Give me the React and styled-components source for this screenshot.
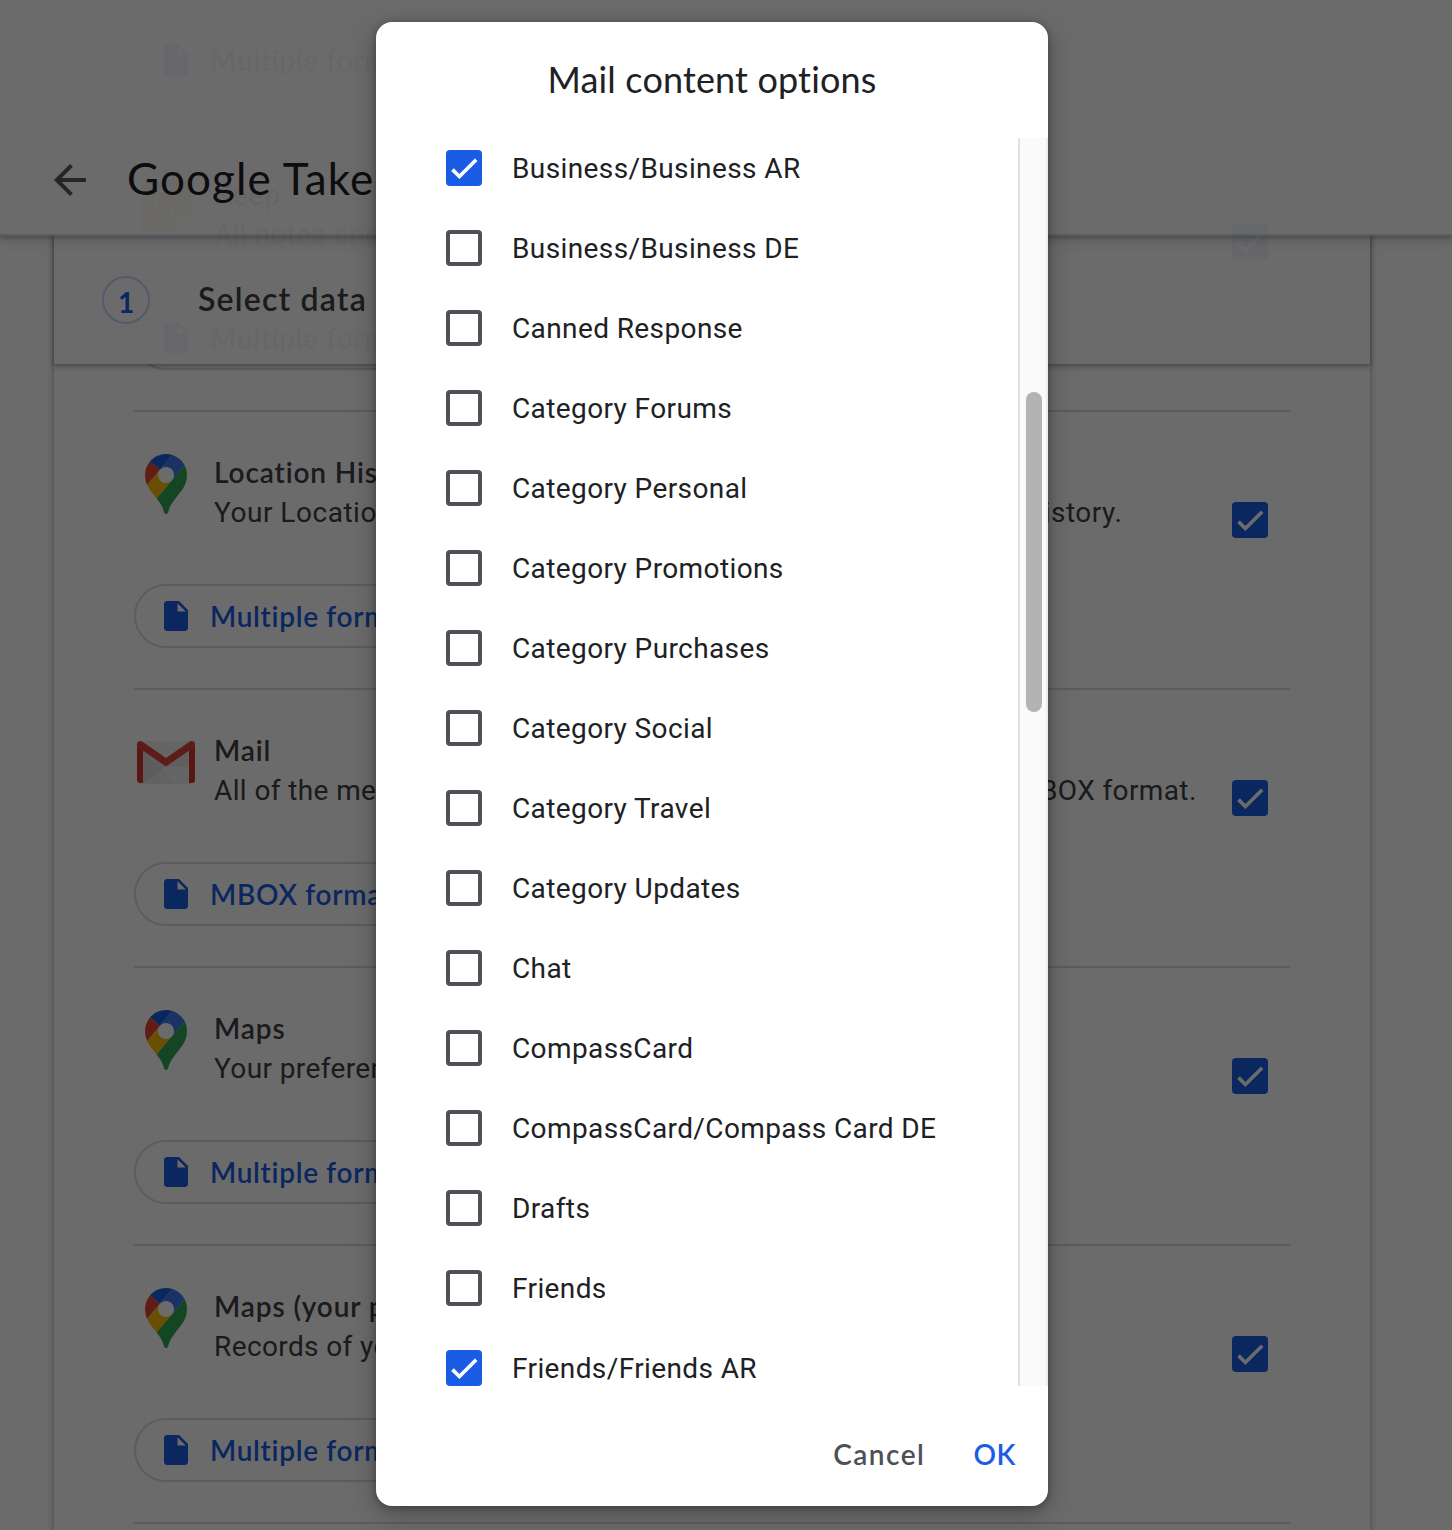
import React from "react";
import styled, { createGlobalStyle, css } from "styled-components";

const GlobalStyle = createGlobalStyle`
  *, *::before, *::after { box-sizing: border-box; }
  html, body { margin: 0; padding: 0; background: #fff; }
  body { overflow: hidden; }
`;

const body = css`font-family: Roboto, "Liberation Sans", sans-serif;`;
const display = css`font-family: Lato, "Open Sans", "Liberation Sans", sans-serif;`;

const BLUE = "#1a5de4";

const Page = styled.div`
  ${body}
  position: relative;
  width: 1452px;
  height: 1530px;
  overflow: hidden;
  background: #fff;
  color: #3c4043;
`;

const Card = styled.main`
  width: 1316px;
  height: 1930px;
  margin: -146px 0 0 54px;
  padding: 0 80px;
  box-shadow: 0 2px 4px rgba(60, 64, 67, 0.3), 0 2px 6px 2px rgba(60, 64, 67, 0.15);
`;

const Section = styled.section`
  display: flex;
  flex-direction: column;
  justify-content: space-between;
  align-items: flex-start;
  height: 278px;
  padding: 40px 0;
  border-top: 2px solid #dadce0;
`;

const Summary = styled.div`
  display: flex;
  align-items: flex-start;
  width: 100%;
  height: 86px;
  padding-right: 22px;
`;

const ProductIcon = styled.span`
  display: flex;
  justify-content: center;
  width: 64px;
  height: 60px;
  margin: 2px 16px 0 0;
  flex: none;
`;

const Copy = styled.div`
  flex: 1;
  white-space: nowrap;
`;

const ProductName = styled.h3`
  ${display}
  margin: 0;
  font-size: 28px;
  line-height: 40px;
  font-weight: 600;
  letter-spacing: 0.9px;
`;

const Description = styled.p`
  margin: 1px 0 0;
  font-size: 28px;
  line-height: 40px;
  letter-spacing: ${(p) => (p.$loose ? "0.52px" : "0.39px")};
`;

const CheckSlot = styled.span`
  display: flex;
  margin-top: 50px;
`;

const FormatButton = styled.button`
  ${display}
  display: inline-flex;
  align-items: center;
  gap: 16px;
  height: 64px;
  padding: 0 32px 0 22px;
  border: 2px solid #dadce0;
  border-radius: 32px;
  background: transparent;
  color: ${BLUE};
  font-size: 28px;
  font-weight: 600;
  letter-spacing: 0.7px;
  white-space: nowrap;
`;

const FormatLabel = styled.span`
  padding-bottom: 1px;
`;

const AppBar = styled.header`
  position: absolute;
  top: 0;
  left: 0;
  z-index: 2;
  display: flex;
  align-items: center;
  gap: 33px;
  width: 100%;
  height: 236px;
  padding: 126px 0 0 46px;
  border-bottom: 2px solid #dadce0;
  background: rgba(255, 255, 255, 0.94);
  box-shadow: 0 2px 4px rgba(60, 64, 67, 0.3), 0 4px 12px 2px rgba(60, 64, 67, 0.15);
`;

const AppTitle = styled.h1`
  ${display}
  margin: 0;
  padding-bottom: 4px;
  color: #202124;
  font-size: 44px;
  font-weight: 400;
  line-height: 56px;
  letter-spacing: 1.1px;
  white-space: nowrap;
`;

const StepBar = styled.div`
  position: absolute;
  top: 236px;
  left: 54px;
  z-index: 1;
  display: flex;
  align-items: center;
  gap: 48px;
  width: 1316px;
  height: 128px;
  padding-left: 48px;
  background: rgba(255, 255, 255, 0.94);
  box-shadow: 0 2px 4px rgba(60, 64, 67, 0.3), 0 2px 6px 2px rgba(60, 64, 67, 0.15);
`;

const StepNumber = styled.span`
  ${display}
  display: flex;
  align-items: center;
  justify-content: center;
  width: 48px;
  height: 48px;
  padding-top: 3px;
  border: 2px solid #c6d9fa;
  border-radius: 50%;
  color: ${BLUE};
  font-size: 28px;
  font-weight: 700;
`;

const StepTitle = styled.h2`
  ${display}
  margin: 0;
  padding-bottom: 2px;
  font-size: 32px;
  font-weight: 600;
  line-height: 40px;
  letter-spacing: 1.2px;
  white-space: nowrap;
`;

const Scrim = styled.div`
  position: absolute;
  inset: 0;
  z-index: 3;
  padding: 22px 404px 24px 376px;
  background: rgba(0, 0, 0, 0.58);
`;

const Dialog = styled.div`
  display: flex;
  flex-direction: column;
  width: 672px;
  height: 1484px;
  border-radius: 16px;
  background: #fff;
  color: #202124;
  box-shadow: 0 2px 8px rgba(0, 0, 0, 0.3), 0 8px 28px rgba(0, 0, 0, 0.24);
`;

const DialogTitle = styled.h2`
  ${display}
  flex: none;
  height: 116px;
  margin: 0;
  font-size: 36px;
  font-weight: 400;
  line-height: 114px;
  letter-spacing: 0.15px;
  text-align: center;
`;

const ScrollArea = styled.div`
  display: flex;
  flex: none;
  justify-content: space-between;
  height: 1248px;
  overflow: hidden;
`;

const Options = styled.ul`
  margin: -10px 0 0;
  padding: 0 0 0 70px;
  list-style: none;
`;

const Option = styled.li`
  display: flex;
  align-items: center;
  gap: 30px;
  height: 80px;
  font-size: 28px;
  letter-spacing: 0.39px;
  white-space: nowrap;
`;

const Box = styled.span`
  display: block;
  width: 36px;
  height: 36px;
  border-radius: 4px;
  border: ${(p) => (p.$checked ? "0" : "4px solid #4d5156")};
  background: ${(p) => (p.$checked ? BLUE : "transparent")};
`;

const Track = styled.div`
  width: 30px;
  height: 1248px;
  padding: 254px 0 0 6px;
  border-left: 2px solid #e1e1e1;
  border-right: 2px solid #ebebeb;
  background: #fafafa;
`;

const Thumb = styled.div`
  width: 16px;
  height: 320px;
  border-radius: 8px;
  background: #b3b3b3;
`;

const Actions = styled.footer`
  display: flex;
  justify-content: flex-end;
  align-items: center;
  gap: 48px;
  height: 120px;
  padding: 15px 32px 0 0;
`;

const Action = styled.button`
  ${display}
  padding: 0;
  border: 0;
  background: none;
  color: ${(p) => (p.$primary ? BLUE : "#4d5156")};
  font-size: 28px;
  font-weight: 600;
  line-height: 40px;
  letter-spacing: ${(p) => (p.$primary ? "0.6px" : "1.5px")};
`;

const Svg = styled.svg`
  display: block;
  flex: none;
`;

function Checkbox({ checked }) {
  return (
    <Box $checked={checked}>
      {checked && (
        <Svg width="36" height="36" viewBox="0 0 36 36" fill="none">
          <path d="M6.5 19.6 13.4 26.5 30.2 9.7" stroke="#fff" strokeWidth="3.7" />
        </Svg>
      )}
    </Box>
  );
}

function BackIcon() {
  return (
    <Svg width="48" height="48" viewBox="0 0 24 24" fill="#54585d">
      <path d="M20 11H7.83l5.59-5.59L12 4l-8 8 8 8 1.41-1.41L7.83 13H20v-2z" />
    </Svg>
  );
}

function FileIcon() {
  return (
    <Svg width="36" height="36" viewBox="0 0 24 24" fill={BLUE}>
      <path d="M6 2c-1.1 0-2 .9-2 2v16c0 1.1.9 2 2 2h12c1.1 0 2-.9 2-2V8l-6-6H6zm7 7V3.5L18.500 9H13z" />
    </Svg>
  );
}

function MapsIcon() {
  return (
    <Svg width="42" height="60" viewBox="0 0 92.3 132.3">
      <path fill="#1a5fe0" d="M60.2 2.2C55.8.8 51 0 46.1 0 32 0 19.3 6.4 10.8 16.5l21.8 18.3L60.2 2.2z" />
      <path fill="#ea4335" d="M10.8 16.5C4.1 24.5 0 34.9 0 46.1c0 8.7 1.7 15.7 4.6 22l28-33.3-21.8-18.3z" />
      <path fill="#4277ee" d="M46.2 28.5c9.8 0 17.7 7.9 17.7 17.7 0 4.3-1.6 8.3-4.2 11.4 0 0 13.9-16.6 27.5-32.7-5.6-10.8-15.3-19-27-22.7L32.6 34.8c3.3-3.8 8.1-6.3 13.6-6.3" />
      <path fill="#fbbc04" d="M46.2 63.800c-9.8 0-17.7-7.9-17.7-17.7 0-4.3 1.5-8.3 4.1-11.3l-28 33.3c4.8 10.6 12.8 19.2 21 29.9l34.1-40.5c-3.3 3.9-8.1 6.3-13.5 6.3" />
      <path fill="#34a853" d="M59.1 109.2c15.4-24.1 33.3-35 33.3-63 0-7.7-1.9-14.9-5.2-21.3L25.6 98c2.6 3.4 5.3 7.3 7.9 11.3 9.4 14.5 6.8 23.1 12.8 23.1s3.4-8.7 12.8-23.2" />
    </Svg>
  );
}

function MailIcon() {
  return (
    <Svg width="60" height="60" viewBox="0 0 60 60">
      <path fill="#f0f0f0" d="M4 9h52v43H4z" />
      <path fill="#dcdcdc" d="M7 16 37 52H7z" />
      <path fill="#e9e9e9" d="M7 51.500 25 38.500 38 52H7z" />
      <path fill="#e2e2e2" d="M7 19 30 34.500 53 19v16L30 34.500 25 38.500z" />
      <path fill="#d3372f" d="M1 12h6v39H4a3 3 0 0 1-3-3zM53 12h6v36a3 3 0 0 1-3 3h-3z" />
      <path fill="#e0443c" d="M4 9c1 0 1.800.3 2.500.8L30 26 53.500 9.800C55.500 8.300 59 9.300 59 12.200c0 1.800-.8 3-2 3.800L30 34.500 3 16c-1.200-.8-2-2-2-3.800C1 10.300 2.300 9 4 9z" />
    </Svg>
  );
}

function KeepIcon() {
  return (
    <Svg width="60" height="60" viewBox="0 0 60 60">
      <path fill="#fbbc04" d="M8 4h44a3 3 0 0 1 3 3v34H41v14H8a3 3 0 0 1-3-3V7a3 3 0 0 1 3-3z" />
      <path
        fill="none"
        stroke="#fff"
        strokeWidth="2"
        d="M30 14a11 11 0 0 0-6 20v5h12v-5a11 11 0 0 0-6-20zM26 45h8"
      />
    </Svg>
  );
}

const products = [
  { format: "Multiple formats" },
  {
    name: "Keep",
    icon: <KeepIcon />,
    description: "All notes and media attachments stored in Google Keep.",
    format: "Multiple formats",
  },
  {
    name: "Location History",
    icon: <MapsIcon />,
    description: "Your Location Data collected while you've opted-in to Location History.",
    loose: true,
    format: "Multiple formats",
  },
  {
    name: "Mail",
    icon: <MailIcon />,
    description: "All of the messages and attachments in your Gmail account in MBOX format.",
    format: "MBOX format",
  },
  {
    name: "Maps",
    icon: <MapsIcon />,
    description: "Your preferences and personal places in Maps",
    format: "Multiple formats",
  },
  {
    name: "Maps (your places)",
    icon: <MapsIcon />,
    description: "Records of your starred places and place reviews.",
    format: "Multiple formats",
  },
];

const options = [
  ["Business/Business AR", true],
  ["Business/Business DE"],
  ["Canned Response"],
  ["Category Forums"],
  ["Category Personal"],
  ["Category Promotions"],
  ["Category Purchases"],
  ["Category Social"],
  ["Category Travel"],
  ["Category Updates"],
  ["Chat"],
  ["CompassCard"],
  ["CompassCard/Compass Card DE"],
  ["Drafts"],
  ["Friends"],
  ["Friends/Friends AR", true],
];

function Product({ name, icon, description, loose, format }) {
  return (
    <Section>
      <Summary>
        {name && (
          <>
            <ProductIcon>{icon}</ProductIcon>
            <Copy>
              <ProductName>{name}</ProductName>
              <Description $loose={loose}>{description}</Description>
            </Copy>
            <CheckSlot>
              <Checkbox checked />
            </CheckSlot>
          </>
        )}
      </Summary>
      <FormatButton>
        <FileIcon />
        <FormatLabel>{format}</FormatLabel>
      </FormatButton>
    </Section>
  );
}

export default function App() {
  return (
    <>
      <GlobalStyle />
      <Page>
        <Card>
          {products.map((product, i) => (
            <Product key={i} {...product} />
          ))}
          <Section />
        </Card>
        <StepBar>
          <StepNumber>1</StepNumber>
          <StepTitle>Select data to include</StepTitle>
        </StepBar>
        <AppBar>
          <BackIcon />
          <AppTitle>Google Takeout</AppTitle>
        </AppBar>
        <Scrim>
          <Dialog role="dialog">
            <DialogTitle>Mail content options</DialogTitle>
            <ScrollArea>
              <Options>
                {options.map(([label, checked]) => (
                  <Option key={label}>
                    <Checkbox checked={checked} />
                    {label}
                  </Option>
                ))}
              </Options>
              <Track>
                <Thumb />
              </Track>
            </ScrollArea>
            <Actions>
              <Action>Cancel</Action>
              <Action $primary>OK</Action>
            </Actions>
          </Dialog>
        </Scrim>
      </Page>
    </>
  );
}
